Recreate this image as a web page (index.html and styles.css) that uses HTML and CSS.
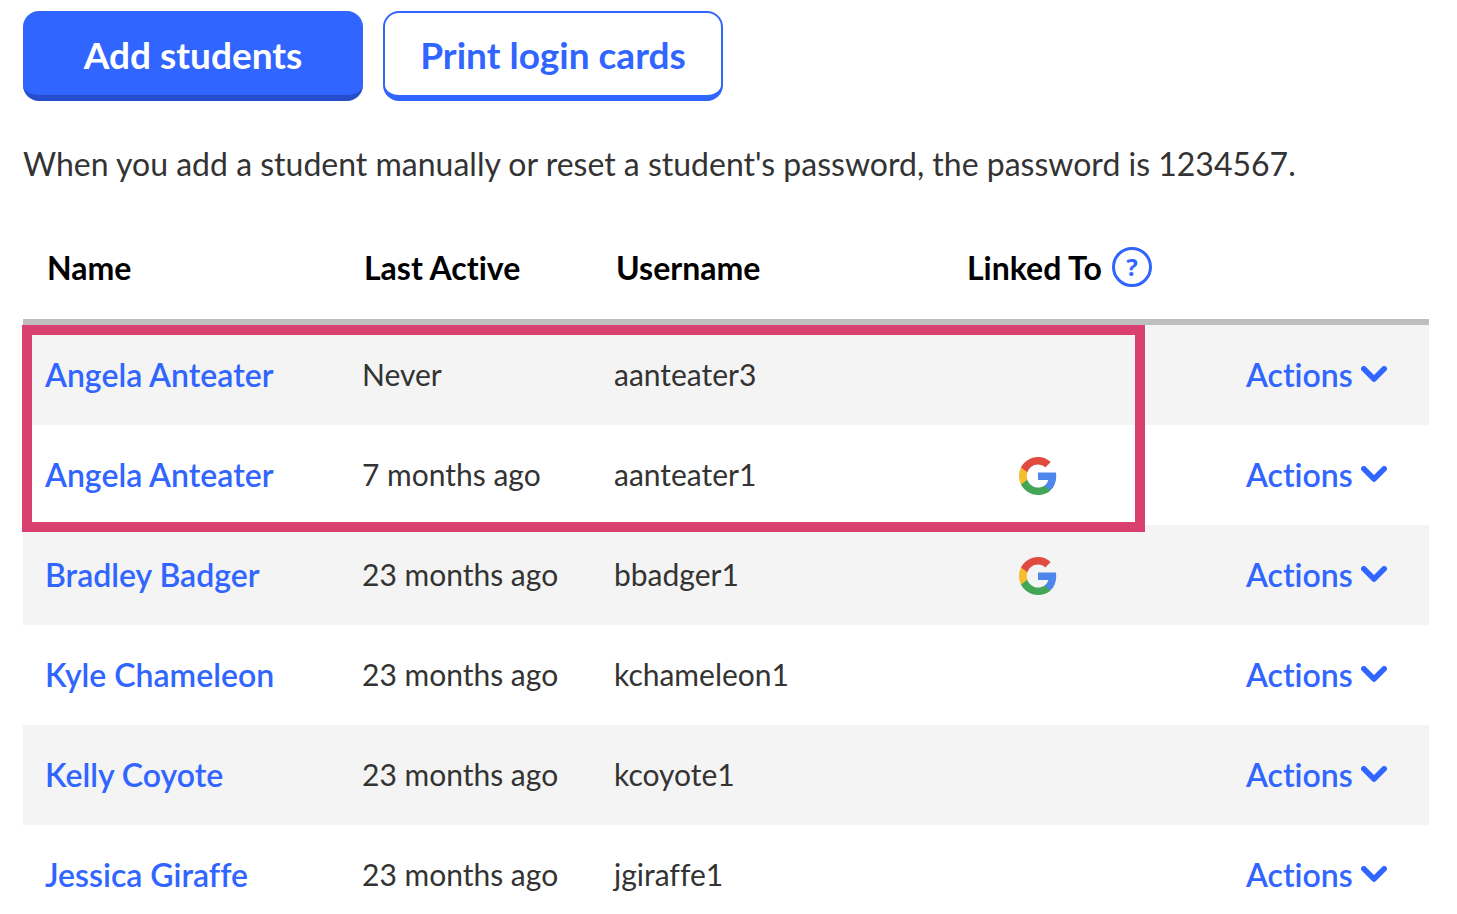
FILE: index.html
```html
<!DOCTYPE html>
<html lang="en">
<head>
    <meta charset="UTF-8">
    <meta name="viewport" content="width=device-width, initial-scale=1.0">
    <title>Students</title>
    <link rel="stylesheet" href="styles.css">
</head>
<body>
    <!-- Shared icons -->
    <svg class="sprite" aria-hidden="true">
        <symbol id="chevron" viewBox="0 0 26 16">
            <path d="M2.800 2.800 L13 13 L23.200 2.800" fill="none" stroke="currentColor" stroke-width="5.500" stroke-linecap="round" stroke-linejoin="round"/>
        </symbol>
        <symbol id="google" viewBox="2 2 44 44">
            <path fill="#4f86ec" d="M45.1 24.5c0-1.6-.1-3.1-.4-4.5H24v8.5h11.8c-.5 2.7-2.1 5.1-4.4 6.6v5.5h7.1c4.2-3.8 6.6-9.5 6.6-16.1z"/>
            <path fill="#43a657" d="M24 46c5.900 0 10.900-2 14.500-5.300l-7.100-5.500c-2 1.300-4.500 2.100-7.400 2.100-5.700 0-10.600-3.900-12.300-9.100H4.300v5.700C8 41.100 15.400 46 24 46z"/>
            <path fill="#f5bd30" d="M11.700 28.200c-.4-1.300-.7-2.700-.7-4.200s.2-2.900.7-4.200v-5.700H4.300C2.900 17.100 2 20.400 2 24s.9 6.900 2.300 9.900l7.400-5.700z"/>
            <path fill="#e04a3f" d="M24 10.800c3.200 0 6.100 1.100 8.400 3.300l6.300-6.300C34.900 4.200 29.900 2 24 2 15.400 2 8 6.900 4.300 14.100l7.400 5.700c1.700-5.200 6.600-9 12.300-9z"/>
        </symbol>
    </svg>

    <div class="buttons">
        <button type="button" class="btn btn-primary">Add students</button>
        <button type="button" class="btn btn-outline">Print login cards</button>
    </div>

    <p class="note">When you add a student manually or reset a student's password, the password is 1234567.</p>

    <div class="table-wrap">
        <table class="students">
            <thead>
                <tr>
                    <th class="col-name">Name</th>
                    <th class="col-active">Last Active</th>
                    <th class="col-username">Username</th>
                    <th class="col-linked">
                        <div class="linked-head">
                            <span>Linked To</span>
                            <button type="button" class="help" aria-label="About linked accounts">?</button>
                        </div>
                    </th>
                    <th class="col-actions"></th>
                </tr>
            </thead>
            <tbody>
                <tr>
                    <td><a href="#">Angela Anteater</a></td>
                    <td>Never</td>
                    <td>aanteater3</td>
                    <td></td>
                    <td><button type="button" class="actions">Actions <svg class="chevron"><use href="#chevron"/></svg></button></td>
                </tr>
                <tr>
                    <td><a href="#">Angela Anteater</a></td>
                    <td>7 months ago</td>
                    <td>aanteater1</td>
                    <td class="linked"><svg class="google" role="img" aria-label="Google"><use href="#google"/></svg></td>
                    <td><button type="button" class="actions">Actions <svg class="chevron"><use href="#chevron"/></svg></button></td>
                </tr>
                <tr>
                    <td><a href="#">Bradley Badger</a></td>
                    <td>23 months ago</td>
                    <td>bbadger1</td>
                    <td class="linked"><svg class="google" role="img" aria-label="Google"><use href="#google"/></svg></td>
                    <td><button type="button" class="actions">Actions <svg class="chevron"><use href="#chevron"/></svg></button></td>
                </tr>
                <tr>
                    <td><a href="#">Kyle Chameleon</a></td>
                    <td>23 months ago</td>
                    <td>kchameleon1</td>
                    <td></td>
                    <td><button type="button" class="actions">Actions <svg class="chevron"><use href="#chevron"/></svg></button></td>
                </tr>
                <tr>
                    <td><a href="#">Kelly Coyote</a></td>
                    <td>23 months ago</td>
                    <td>kcoyote1</td>
                    <td></td>
                    <td><button type="button" class="actions">Actions <svg class="chevron"><use href="#chevron"/></svg></button></td>
                </tr>
                <tr>
                    <td><a href="#">Jessica Giraffe</a></td>
                    <td>23 months ago</td>
                    <td>jgiraffe1</td>
                    <td></td>
                    <td><button type="button" class="actions">Actions <svg class="chevron"><use href="#chevron"/></svg></button></td>
                </tr>
            </tbody>
        </table>
        <div class="highlight"></div>
    </div>
</body>
</html>
```
FILE: styles.css
```css
* {
    box-sizing: border-box;
}
html {
    height: 100%;
    overflow: hidden;
}
body {
    height: 100%;
    margin: 0;
    padding: 11px 28px 0 23px;
    overflow: hidden;
    background-color: #fff;
    color: #333;
    font-family: Lato, 'Open Sans', sans-serif;
    font-size: 30px;
    font-variant-ligatures: none;
}
button {
    font-family: inherit;
    font-variant-ligatures: none;
    cursor: pointer;
}
.sprite {
    display: none;
}
.buttons {
    display: flex;
    gap: 20px;
}
.btn {
    width: 340px;
    height: 90px;
    padding: 0;
    border-radius: 16px;
    font-size: 37px;
    font-weight: 700;
}
.btn-primary {
    background-color: #3165ff;
    border: 0 solid #264dcb;
    border-top: 2px solid #3165ff;
    border-bottom-width: 6px;
    color: #fff;
}
.btn-outline {
    background-color: #fff;
    border: 2px solid #3165ff;
    border-bottom-width: 6px;
    color: #3165ff;
}
.note {
    margin: 43px 0 45px;
    font-size: 32px;
    line-height: 40px;
    white-space: nowrap;
}
.table-wrap {
    position: relative;
}
.students {
    width: 100%;
    table-layout: fixed;
    border-collapse: separate;
    border-spacing: 0;
}
th {
    height: 96px;
    padding: 0 0 14px 24px;
    border-bottom: 6px solid #bebebe;
    color: #000;
    font-size: 32px;
    font-weight: 700;
    text-align: left;
    white-space: nowrap;
}
td {
    height: 100px;
    padding: 0 0 2px 22px;
    white-space: nowrap;
}
tbody tr:nth-child(odd) {
    background-color: #f4f4f4;
}
.col-name {
    width: 317px;
}
.col-active {
    width: 252px;
}
.col-linked {
    width: 279px;
    padding-left: 22px;
}
.col-actions {
    width: 205px;
}
.linked-head {
    display: flex;
    align-items: center;
    gap: 10px;
}
.help {
    width: 40px;
    height: 40px;
    padding: 0;
    background: none;
    border: 3px solid #3165ff;
    border-radius: 50%;
    color: #3165ff;
    font-family: 'Noto Sans', sans-serif;
    font-size: 24px;
    font-weight: 700;
    line-height: 32px;
}
td a,
.actions {
    color: #3165ff;
    font-size: 32px;
    font-weight: 600;
    text-decoration: none;
}
.actions {
    display: flex;
    align-items: center;
    gap: 8px;
    padding: 0;
    background: none;
    border: none;
}
.chevron {
    width: 26px;
    height: 16px;
}
.linked {
    padding: 2px 0 0 74px;
}
.google {
    display: block;
    width: 38px;
    height: 38px;
}
/* Frame around the duplicate accounts */
.highlight {
    position: absolute;
    top: 96px;
    right: 284px;
    left: -1px;
    height: 207px;
    border: 10px solid #d94070;
    pointer-events: none;
}
```
